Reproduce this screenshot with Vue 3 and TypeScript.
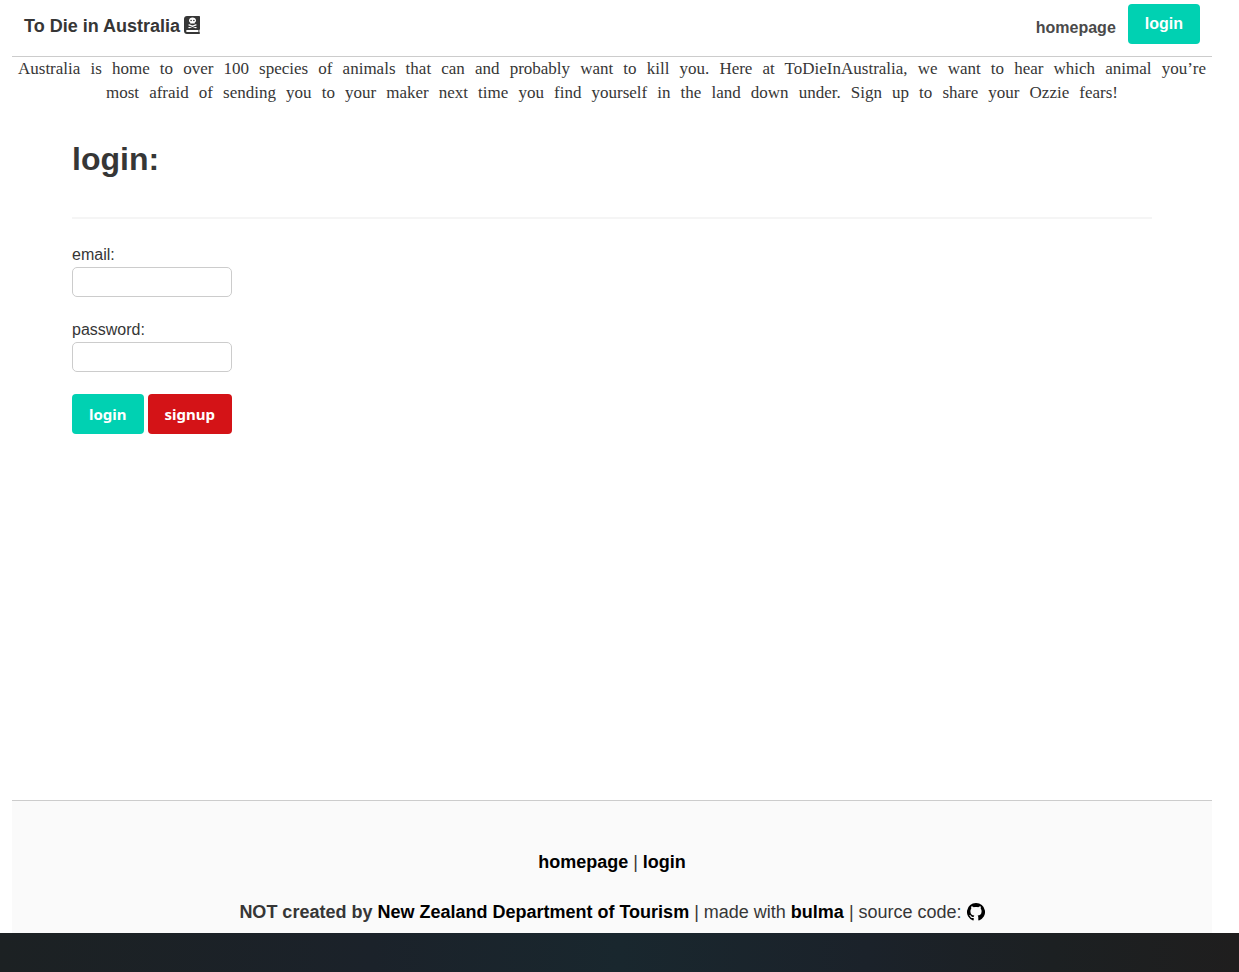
<script setup lang="ts">
import { ref } from 'vue'

const email = ref('')
const password = ref('')
</script>

<template>
  <div class="window">
    <div class="page">
      <header class="navbar">
        <a class="brand" href="#">
          <span>To Die in Australia</span>
          <svg class="book" viewBox="0 0 16 18" aria-hidden="true">
            <path
              fill="currentColor"
              fill-rule="evenodd"
              d="M3 0h12c.6 0 1 .4 1 1v12c0 .5-.2.800-.6 1v2c.4.2.6.5.6 1s-.4 1-1 1H3c-1.700 0-3-1.300-3-3V3c0-1.700 1.300-3 3-3zM3.200 13.900a1.100 1.100 0 0 0 0 2.200h11.200v-2.200z"
            />
            <path
              fill="#fff"
              fill-rule="evenodd"
              d="M8.500 1.500c2 0 3.500 1.200 3.500 2.900 0 1-.5 1.800-1.300 2.300v.9H6.300v-.9C5.500 6.200 5 5.400 5 4.400c0-1.700 1.500-2.900 3.500-2.900zM7.100 3.700a.8.8 0 1 0 0 1.600.8.8 0 0 0 0-1.600zm2.800 0a.8.8 0 1 0 0 1.600.8.8 0 0 0 0-1.600z"
            />
            <path class="bones" d="M5 8.900l7 2.700M12 8.900l-7 2.700" />
          </svg>
        </a>
        <nav class="menu">
          <a class="menu-link" href="#">homepage</a>
          <a class="button primary" href="#">login</a>
        </nav>
      </header>

      <p class="intro">
        <span class="line">Australia is home to over 100 species of animals that can and probably want to kill you. Here at ToDieInAustralia, we want to hear which animal you’re</span>
        <span class="line short">most afraid of sending you to your maker next time you find yourself in the land down under. Sign up to share your Ozzie fears!</span>
      </p>

      <main class="content">
        <h1>login:</h1>
        <hr />
        <form @submit.prevent>
          <div class="field">
            <label for="email">email:</label>
            <input id="email" v-model="email" type="email" />
          </div>
          <div class="field">
            <label for="password">password:</label>
            <input id="password" v-model="password" type="password" />
          </div>
          <div class="actions">
            <button class="button primary" type="submit">login</button>
            <button class="button danger" type="button">signup</button>
          </div>
        </form>
      </main>

      <footer class="footer">
        <p><a href="#">homepage</a> | <a href="#">login</a></p>
        <p>
          <strong>NOT created by <a href="#">New Zealand Department of Tourism</a></strong> | made with
          <a href="#">bulma</a> | source code:
          <a href="#" aria-label="GitHub"><svg class="github" viewBox="0 0 18 18" aria-hidden="true">
            <path
              fill="currentColor"
              d="M9 0a9 9 0 0 0-3 17.500c.5.1.700-.2.700-.5v-2.100c-2.600.5-3.200-.8-3.500-1.500-.2-.5-.6-.9-1-1.200.8-.3 1.500.2 1.900.8.6 1 1.500 1.200 2.600.9.1-.6.3-1 .7-1.300C5 12.300 3.400 11.300 3.400 8.200c0-1 .3-1.900.9-2.500-.2-.6-.2-1.500.1-2.400.8 0 1.600.4 2.400.9 1.500-.4 2.900-.4 4.400 0 .8-.5 1.600-.9 2.400-.9.3.9.3 1.800.1 2.400.6.6.9 1.500.9 2.500 0 3.100-1.600 4.100-4 4.400.4.4.7 1 .7 1.800V17c0 .3.2.6.7.5A9 9 0 0 0 9 0z"
            />
          </svg></a>
        </p>
      </footer>
    </div>
    <div class="taskbar"></div>
  </div>
</template>

<style>
body {
  margin: 0;
  background: #fff;
}
</style>

<style scoped>
.window {
  display: flex;
  flex-direction: column;
  min-height: 100vh;
  color: #363636;
  font: 16px/24px "Liberation Sans", Arial, sans-serif;
}

.page {
  flex: 1;
  display: flex;
  flex-direction: column;
  margin: 0 27px 0 12px;
}

a {
  text-decoration: none;
}

.navbar {
  display: flex;
  justify-content: space-between;
  height: 56px;
  border-bottom: 1px solid #ccc;
}

.brand {
  display: flex;
  align-items: center;
  gap: 4px;
  padding: 0 12px 4px;
  color: #363636;
  font-size: 18px;
  font-weight: 700;
}

.book {
  width: 16px;
  height: 18px;
  margin-bottom: 2px;
}

.bones {
  fill: none;
  stroke: #fff;
  stroke-width: 1.3;
  stroke-linecap: round;
}

.menu {
  display: flex;
  align-items: center;
  gap: 12px;
  padding: 0 12px 8px 0;
}

.menu-link {
  padding-top: 8px;
  color: #4a4a4a;
  font-weight: 700;
}

.button {
  box-sizing: border-box;
  height: 40px;
  padding: 0 16px;
  border: 1px solid transparent;
  border-radius: 4px;
  color: #fff;
  font-weight: 700;
  line-height: 38px;
}

.primary {
  background: #00d1b2;
}

.danger {
  background: #d41317;
}

.intro {
  margin: 0;
  padding: 0 6px;
  font-family: "Liberation Serif", "Times New Roman", serif;
  font-size: 17px;
}

.line {
  display: block;
  text-align: justify;
  text-align-last: justify;
}

.short {
  margin: 0 88px;
}

.content {
  flex: 1;
  padding: 36px 60px 0;
}

h1 {
  margin: 0 0 40px;
  font-size: 32px;
  line-height: 36px;
}

hr {
  height: 2px;
  margin: 0 0 24px;
  border: 0;
  background: #f5f5f5;
}

.field {
  display: flex;
  flex-direction: column;
  align-items: flex-start;
  margin-bottom: 21px;
}

input {
  box-sizing: border-box;
  width: 160px;
  height: 30px;
  padding: 0 8px;
  border: 1px solid #ccc;
  border-radius: 5px;
  background: #fff;
  font: inherit;
}

.actions {
  display: flex;
  gap: 4px;
  padding-top: 1px;
}

.actions .button {
  padding-bottom: 2px;
  font-family: "Noto Sans", "Open Sans", sans-serif;
  font-size: 15px;
}

.footer {
  padding: 48px 24px 8px;
  border-top: 1px solid #ccc;
  background: #fafafa;
  font-size: 18px;
  line-height: 26px;
  text-align: center;
}

.footer p {
  margin: 0;
}

.footer p + p {
  margin-top: 24px;
}

.footer a {
  color: #000;
  font-weight: 700;
}

.github {
  width: 18px;
  height: 18px;
  vertical-align: -3px;
}

.taskbar {
  height: 39px;
  background: linear-gradient(90deg, #1c2123 0%, #1b222a 30%, #19272e 50%, #1b222a 70%, #1c2022 85%, #1f1e1e 100%);
}
</style>
